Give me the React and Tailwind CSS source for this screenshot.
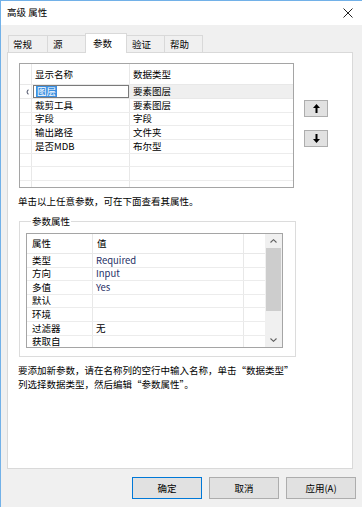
export default function App() {
  const listRows = [
    ["裁剪工具", "要素图层"],
    ["字段", "字段"],
    ["输出路径", "文件夹"],
    ["是否MDB", "布尔型"],
    ["", ""],
    ["", ""],
    ["", ""],
  ];
  const propRows = [
    ["类型", "Required"],
    ["方向", "Input"],
    ["多值", "Yes"],
    ["默认", ""],
    ["环境", ""],
    ["过滤器", "无"],
    ["获取自", ""],
  ];
  return (
    <div className="w-[362px] h-[507px] bg-[#f0f0f0] border-t border-l border-[#72b1e8] flex flex-col font-['Noto_Sans_CJK_SC',sans-serif] text-[9.5px] text-black overflow-hidden">
      {/* title bar */}
      <div className="h-[24px] bg-white flex items-center justify-between pl-[6px] pr-[9px] shrink-0">
        <span className="text-[9.5px] leading-none">高级 属性</span>
        <svg width="10" height="10" viewBox="0 0 10 10">
          <path d="M0.5 0.5 L9.5 9.5 M9.5 0.5 L0.5 9.5" stroke="#222" strokeWidth="1" />
        </svg>
      </div>

      {/* tabs */}
      <div className="mt-[8px] pl-[7px] flex items-end h-[19px] shrink-0">
        <div className="w-[40px] h-[17px] border border-b-0 border-[#d9d9d9] flex items-center pl-[4px]">常规</div>
        <div className="-ml-px w-[39px] h-[17px] border border-b-0 border-[#d9d9d9] flex items-center pl-[5px]">源</div>
        <div className="-ml-px w-[42px] h-[20px] -mb-px border border-b-0 border-[#d9d9d9] bg-white flex items-center pl-[7px] relative z-10">参数</div>
        <div className="-ml-px w-[39px] h-[17px] border border-b-0 border-[#d9d9d9] flex items-center pl-[5px]">验证</div>
        <div className="-ml-px w-[39px] h-[17px] border border-b-0 border-[#d9d9d9] flex items-center pl-[5px]">帮助</div>
      </div>

      {/* panel */}
      <div className="ml-[6px] w-[346px] h-[417px] shrink-0 border border-[#d9d9d9] bg-white pl-[11px] pt-[10px] flex flex-col">
        <div className="flex">
          {/* list */}
          <div className="w-[275px] h-[125px] border border-[#a5a5a5] flex flex-col overflow-hidden">
            <div className="h-[21px] shrink-0 flex border-b border-[#e8e8e8]">
              <div className="w-[12px] border-r border-[#e8e8e8]" />
              <div className="w-[98px] border-r border-[#e8e8e8] flex items-center pl-[3px]">显示名称</div>
              <div className="flex-1 flex items-center pl-[3px]">数据类型</div>
            </div>
            <div className="h-[14px] shrink-0 flex border-b border-[#e8e8e8]">
              <div className="w-[12px] border-r border-[#e8e8e8] flex items-center justify-end pr-[2px]">
                <svg width="4" height="6" viewBox="0 0 4 6">
                  <path d="M3.5 0.3 C1 1.5 1 4.5 3.5 5.7 L3.5 4.5 C2.3 3.8 2.3 2.2 3.5 1.5 Z" fill="#555a6e" />
                </svg>
              </div>
              <div className="w-[98px] border-r border-[#e8e8e8] flex items-stretch pl-px">
                <div className="flex-1 border border-[#7a7a7a] bg-white flex items-center pl-[2px]">
                  <span className="bg-[#3b8fe0] text-white leading-[11px] px-[1px]">图层</span>
                </div>
              </div>
              <div className="flex-1 bg-[#efefef] flex items-center pl-[3px]">要素图层</div>
            </div>
            {listRows.map((r, i) => (
              <div key={i} className="h-[13.7px] shrink-0 flex border-b border-[#ececec]">
                <div className="w-[12px] border-r border-[#e8e8e8]" />
                <div className="w-[98px] border-r border-[#e8e8e8] flex items-center pl-[3px] leading-none">{r[0]}</div>
                <div className="flex-1 flex items-center pl-[3px] leading-none">{r[1]}</div>
              </div>
            ))}
          </div>
          {/* up/down */}
          <div className="ml-[10px] flex flex-col pt-[37px] gap-[13px]">
            <div className="w-[24px] h-[17px] bg-[#e1e1e1] border border-[#adadad] flex items-center justify-center">
              <svg width="7" height="9" viewBox="0 0 7 9">
                <path d="M3.5 0 L7 4 L4.5 4 L4.5 9 L2.5 9 L2.5 4 L0 4 Z" fill="#000" />
              </svg>
            </div>
            <div className="w-[24px] h-[17px] bg-[#e1e1e1] border border-[#adadad] flex items-center justify-center">
              <svg width="7" height="9" viewBox="0 0 7 9">
                <path d="M3.5 9 L7 5 L4.5 5 L4.5 0 L2.5 0 L2.5 5 L0 5 Z" fill="#000" />
              </svg>
            </div>
          </div>
        </div>

        <div className="mt-[7px] -ml-px leading-[12px] whitespace-nowrap">单击以上任意参数，可在下面查看其属性。</div>

        {/* group box */}
        <fieldset className="mt-[8px] w-[277px] border border-[#dcdcdc] pl-[6px] pb-[8px] pt-[6px]">
          <legend className="ml-[5px] px-[1px] leading-[12px]">参数属性</legend>
          <div className="w-[257px] h-[115px] border border-[#a5a5a5] flex overflow-hidden">
            <div className="flex-1 flex flex-col overflow-hidden">
              <div className="h-[20px] shrink-0 flex border-b border-[#e8e8e8]">
                <div className="w-[66px] border-r border-[#e8e8e8] flex items-center pl-[5px]">属性</div>
                <div className="w-[151px] border-r border-[#e8e8e8] flex items-center pl-[4px]">值</div>
                <div className="flex-1" />
              </div>
              {propRows.map((r, i) => (
                <div key={i} className="h-[13.6px] shrink-0 flex border-b border-[#ececec]">
                  <div className="w-[66px] border-r border-[#e8e8e8] flex items-center pl-[5px] leading-none">{r[0]}</div>
                  <div className="w-[151px] border-r border-[#e8e8e8] flex items-center pl-[3px] leading-none text-[#1f2f66]">
                    {r[1] === "无" ? <span className="text-black">{r[1]}</span> : r[1]}
                  </div>
                  <div className="flex-1" />
                </div>
              ))}
            </div>
            {/* scrollbar */}
            <div className="w-[17px] bg-[#f0f0f0] flex flex-col shrink-0">
              <div className="h-[14px] flex items-center justify-center">
                <svg width="7" height="4" viewBox="0 0 7 4">
                  <path d="M0.5 3.5 L3.5 0.7 L6.5 3.5" stroke="#606060" strokeWidth="1.1" fill="none" />
                </svg>
              </div>
              <div className="mx-[1px] h-[63px] bg-[#cdcdcd]" />
              <div className="flex-1" />
              <div className="h-[14px] flex items-center justify-center">
                <svg width="7" height="4" viewBox="0 0 7 4">
                  <path d="M0.5 0.5 L3.5 3.3 L6.5 0.5" stroke="#606060" strokeWidth="1.1" fill="none" />
                </svg>
              </div>
            </div>
          </div>
        </fieldset>

        <div className="mt-[6px] -ml-px whitespace-nowrap flex flex-col">
          <div className="leading-[14px]">要添加新参数，请在名称列的空行中输入名称，单击“数据类型”</div>
          <div className="leading-[14px]">列选择数据类型，然后编辑“参数属性”。</div>
        </div>
      </div>

      {/* buttons */}
      <div className="mt-[8px] flex justify-end pr-[6px] gap-[7px]">
        <div className="w-[70px] h-[22px] bg-[#e1e1e1] border border-[#0078d7] flex items-center justify-center">确定</div>
        <div className="w-[70px] h-[22px] bg-[#e1e1e1] border border-[#adadad] flex items-center justify-center">取消</div>
        <div className="w-[70px] h-[22px] bg-[#e1e1e1] border border-[#adadad] flex items-center justify-center">应用(A)</div>
      </div>
    </div>
  );
}
